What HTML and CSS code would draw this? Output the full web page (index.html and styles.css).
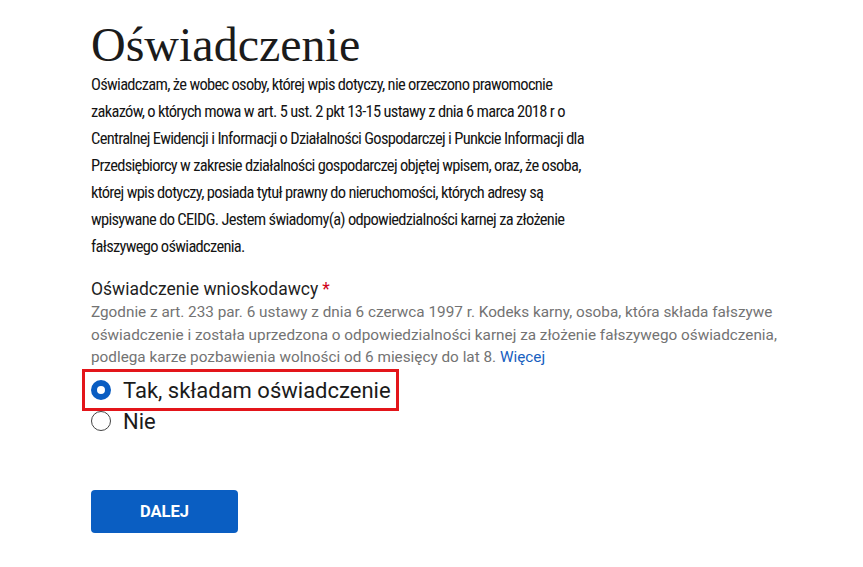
FILE: index.html
```html
<!DOCTYPE html>
<html lang="pl">
<head>
<meta charset="utf-8">
<link rel="stylesheet" href="styles.css">
</head>
<body>
<main class="page">
  <h1 class="title">Oświadczenie</h1>
  <p class="lead">Oświadczam, że wobec osoby, której wpis dotyczy, nie orzeczono prawomocnie zakazów, o których mowa w art. 5 ust. 2 pkt 13-15 ustawy z dnia 6 marca 2018 r o Centralnej Ewidencji i Informacji o Działalności Gospodarczej i Punkcie Informacji dla Przedsiębiorcy w zakresie działalności gospodarczej objętej wpisem, oraz, że osoba, której wpis dotyczy, posiada tytuł prawny do nieruchomości, których adresy są wpisywane do CEIDG. Jestem świadomy(a) odpowiedzialności karnej za złożenie fałszywego oświadczenia.</p>
  <fieldset class="field">
    <div class="label">Oświadczenie wnioskodawcy<span class="req">*</span></div>
    <div class="hint">Zgodnie z art. 233 par. 6 ustawy z dnia 6 czerwca 1997 r. Kodeks karny, osoba, która składa fałszywe oświadczenie i została uprzedzona o odpowiedzialności karnej za złożenie fałszywego oświadczenia, podlega karze pozbawienia wolności od 6 miesięcy do lat 8. <a class="more" href="#">Więcej</a></div>
    <div class="options">
      <label class="option highlighted"><span class="radio checked"></span><span>Tak, składam oświadczenie</span></label>
      <label class="option"><span class="radio"></span><span>Nie</span></label>
    </div>
  </fieldset>
  <button class="btn" type="button">DALEJ</button>
</main>
</body>
</html>
```
FILE: styles.css
```css
html, body { margin: 0; padding: 0; background: #fff; }
body { font-family: Roboto, "Noto Sans", sans-serif; color: #1b1b1b; }
.page { padding: 19px 0 0 91px; width: 740px; }
.title {
  font-family: "Liberation Serif", "DejaVu Serif", serif;
  font-weight: 400;
  font-size: 48px;
  line-height: 52px;
  margin: 0;
  color: #1b1b1b;
}
.lead {
  margin: 0;
  font-family: "Roboto Condensed", "Liberation Sans Narrow", "DejaVu Sans Condensed", Roboto, sans-serif;
  font-stretch: condensed;
  font-size: 16.5px;
  letter-spacing: -0.7px;
  line-height: 27px;
  width: 510px;
  color: #141414;
}
.field { border: 0; margin: 17px 0 0; padding: 0; }
.label { font-size: 17.5px; line-height: 24px; color: #1f1f1f; }
.req { color: #d0021b; margin-left: 4px; }
.hint { font-size: 15.3px; line-height: 22.5px; color: #737373; width: 700px; }
.more { color: #1760c0; text-decoration: none; }
.options { display: flex; flex-direction: column; align-items: flex-start; margin: 5px 0 0 -6px; }
.option { display: flex; align-items: center; gap: 12px; font-size: 22px; line-height: 31px; color: #1b1b1b; padding: 0 6px; }
.option.highlighted { outline: 3px solid #e3151a; padding: 3px 5px 2px 6px; margin: -2px 0; }
.radio { width: 20px; height: 20px; border: 1.5px solid #444; border-radius: 50%; box-sizing: border-box; display: inline-block; flex: none; }
.radio.checked { border: 6px solid #0a5dc2; background: #fff; }
.btn {
  margin-top: 53px;
  width: 147px; height: 43px;
  background: #0a5ec2; color: #fff;
  border: 0; border-radius: 4px;
  font-family: Roboto, sans-serif; font-weight: 700; font-size: 16.5px;
}
```
